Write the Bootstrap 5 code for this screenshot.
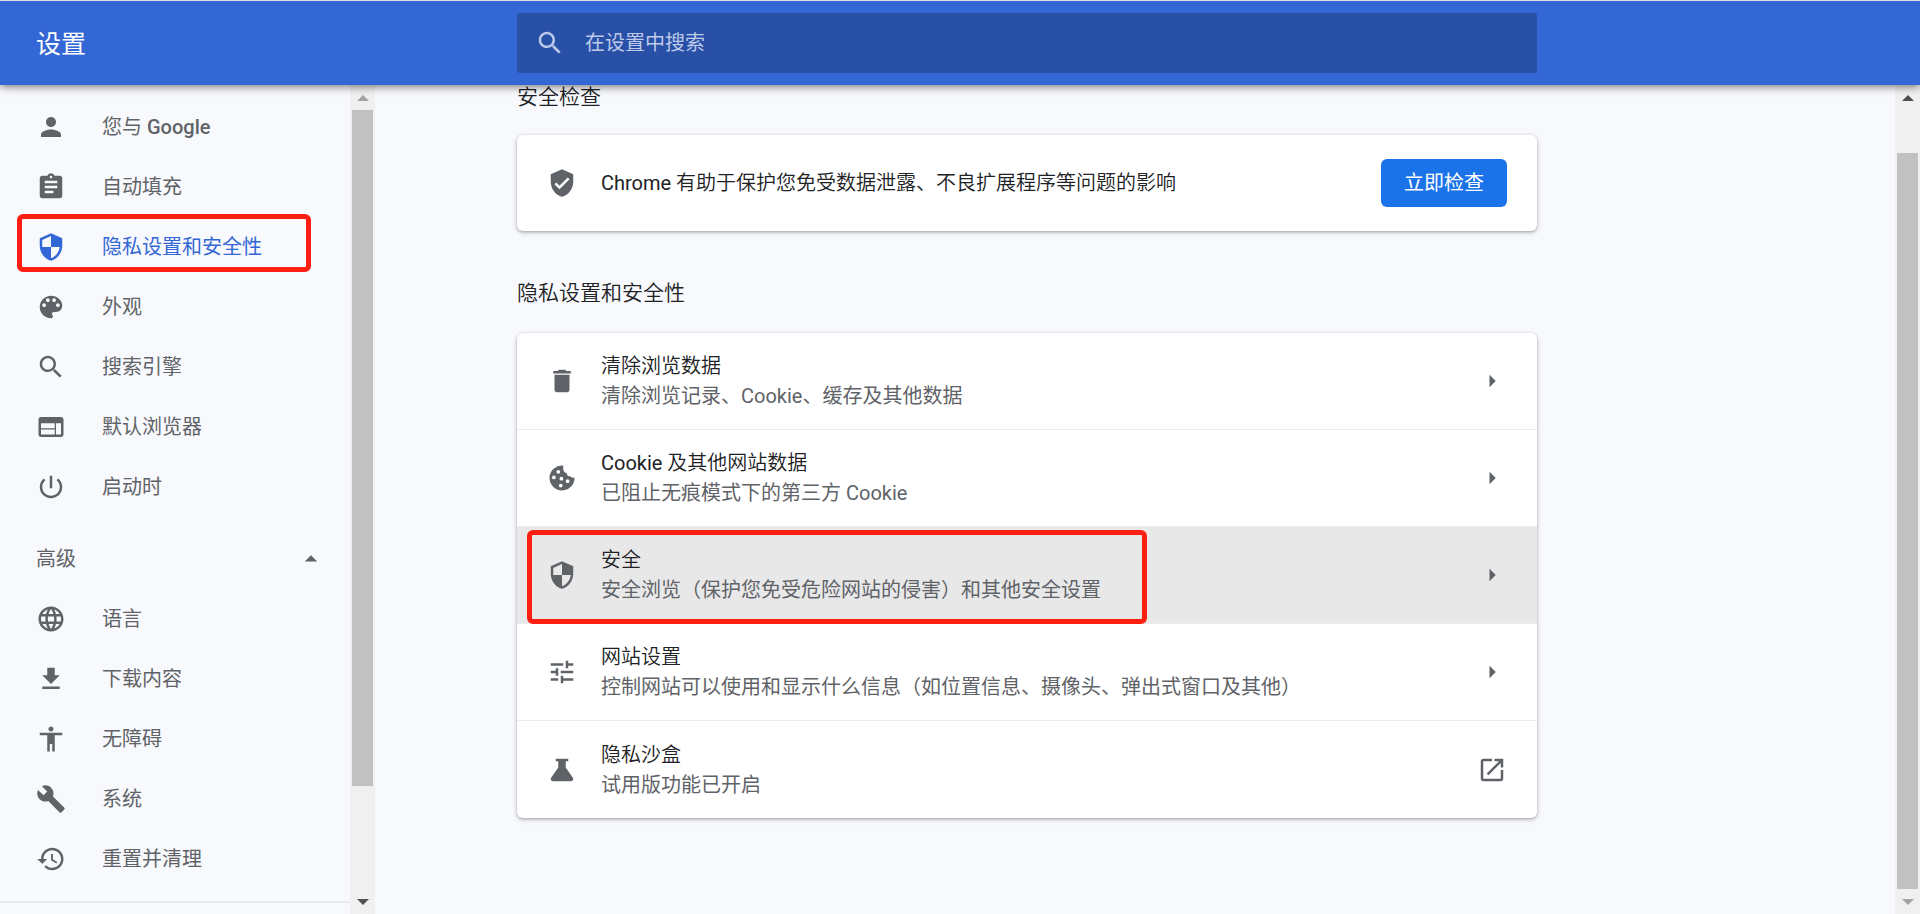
<!DOCTYPE html>
<html lang="zh-CN">
<head>
<meta charset="utf-8">
<meta name="viewport" content="width=device-width, initial-scale=1">
<title>设置</title>
<link href="https://cdn.jsdelivr.net/npm/bootstrap@5.3.0/dist/css/bootstrap.min.css" rel="stylesheet">
<style>
  body { font: 350 20px/30px Roboto, "Noto Sans CJK SC", sans-serif; color: #202124; background: #f8f9fc; }
  svg { width: 30px; height: 30px; fill: #5f6368; flex: none; display: block; }
  .topbar { background: #3367d6; border-top: 1px solid #dee1e6; height: 85px; z-index: 2; box-shadow: 0 1px 9px rgba(0,0,0,.6); }
  .topbar-name { width: 517px; padding: 4px 0 0 36px; font-size: 25px; font-weight: 400; color: #fff; flex: none; }
  .find-box { background: #2850a7; border-radius: 3px; height: 60px; max-width: 1020px; padding: 0 18px; gap: 20px; }
  .find-box svg { fill: #bdcaea; }
  .find-box input { border: 0; background: none; outline: 0; color: #fff; min-width: 0; }
  .find-box input::placeholder { color: #bdcaea; opacity: 1; }
  .side { width: 350px; padding-top: 12px; overflow: hidden; flex: none; }
  .side-link { display: flex; align-items: center; height: 60px; padding-left: 36px; gap: 36px; color: #5f6368; font-weight: 400; text-decoration: none; position: relative; white-space: nowrap; }
  .side-link.current { color: #3367d6; }
  .side-link.current svg { fill: #3367d6; }
  .latin { font-weight: 400; }
  .side-link .latin { font-weight: 500; }
  .side-more { width: 100%; height: 72px; padding: 12px 24px 0 36px; border: 0; background: none; color: #5f6368; font-weight: 400; }
  .side-rule { border-top: 2px solid #e8eaed; margin-top: 12px; }
  .marker { position: absolute; border: 5px solid #ff1f12; border-radius: 6px; pointer-events: none; }
  .side-link .marker { left: 17px; top: -3px; width: 294px; height: 58px; }
  .option .marker { left: 10px; top: 3px; width: 620px; height: 94px; max-width: 96%; }
  .bar { width: 25px; background: #f0f0f0; flex: none; }
  .bar-end { height: 25px; display: flex; align-items: center; justify-content: center; flex: none; }
  .bar-end::before { content: ""; border: 6px solid transparent; border-top-width: 0; border-bottom: 6px solid #505050; }
  .bar-end.down::before { border-bottom-width: 0; border-top: 6px solid #505050; }
  .bar-end.off::before { border-top-color: #a3a3a3; border-bottom-color: #a3a3a3; }
  .bar-thumb { background: #c1c1c1; margin: 0 2px; }
  .content { padding: 0 142px; min-width: 0; }
  .content-col { max-width: 1020px; }
  .section-name { font-size: 21px; line-height: 24px; font-weight: 350; margin: 0 0 26px; }
  .panel + .section-name { margin: 50px 0 28px; }
  .panel { background: #fff; border-radius: 6px; box-shadow: 0 1px 3px rgba(60,64,67,.35), 0 2px 5px rgba(60,64,67,.18); overflow: hidden; }
  .check-row { min-height: 96px; padding: 0 30px; gap: 24px; }
  .go { background: #1a73e8; color: #fff; border: 0; border-radius: 6px; height: 48px; width: 126px; flex: none; font-weight: 400; padding: 0; }
  .option { min-height: 97px; padding: 0 30px; gap: 24px; border-bottom: 1px solid #ececec; color: inherit; text-decoration: none; position: relative; display: flex; align-items: center; }
  .option:last-child { border-bottom: 0; }
  .option.hovered { background: #e8e8e8; }
  .hint { color: #5f6368; font-weight: 400; }
</style>
</head>
<body class="vh-100 d-flex flex-column overflow-hidden">

<header class="topbar d-flex align-items-center position-relative flex-shrink-0">
  <h1 class="topbar-name m-0">设置</h1>
  <label class="find-box d-flex align-items-center flex-grow-1">
    <svg viewBox="0 0 24 24"><path d="M15.5 14h-.79l-.28-.27C15.41 12.59 16 11.11 16 9.5 16 5.91 13.09 3 9.5 3S3 5.91 3 9.5 5.91 16 9.5 16c1.61 0 3.09-.59 4.23-1.57l.27.28v.79l5 4.99L20.49 19l-4.99-5zm-6 0C7.01 14 5 11.99 5 9.5S7.01 5 9.5 5 14 7.01 14 9.5 11.99 14 9.5 14z"/></svg>
    <input class="flex-grow-1 p-0" type="search" placeholder="在设置中搜索" aria-label="在设置中搜索">
  </label>
</header>

<div class="d-flex flex-grow-1 overflow-hidden">
  <nav class="side" aria-label="设置">
    <a class="side-link" href="#"><svg viewBox="0 0 24 24"><path d="M12 12c2.21 0 4-1.79 4-4s-1.79-4-4-4-4 1.79-4 4 1.79 4 4 4zm0 2c-2.67 0-8 1.34-8 4v2h16v-2c0-2.66-5.33-4-8-4z"/></svg><span>您与 <span class="latin">Google</span></span></a>
    <a class="side-link" href="#"><svg viewBox="0 0 24 24"><path d="M19 3h-4.18C14.4 1.84 13.3 1 12 1s-2.4.84-2.82 2H5c-1.1 0-2 .9-2 2v14c0 1.1.9 2 2 2h14c1.1 0 2-.9 2-2V5c0-1.1-.9-2-2-2zm-7 0c.55 0 1 .45 1 1s-.45 1-1 1-1-.45-1-1 .45-1 1-1zm2 14H7v-2h7v2zm3-4H7v-2h10v2zm0-4H7V7h10v2z"/></svg>自动填充</a>
    <a class="side-link current" href="#" aria-current="page"><svg viewBox="0 0 24 24"><path d="M12 1L3 5v6c0 5.55 3.84 10.74 9 12 5.16-1.26 9-6.45 9-12V5l-9-4zm0 10.99h7c-.53 4.12-3.28 7.79-7 8.94V12H5V6.3l7-3.11v8.8z"/></svg>隐私设置和安全性<span class="marker"></span></a>
    <a class="side-link" href="#"><svg viewBox="0 0 24 24"><path d="M12 3c-4.97 0-9 4.03-9 9s4.03 9 9 9c.83 0 1.5-.67 1.5-1.5 0-.39-.15-.74-.39-1.01-.23-.26-.38-.61-.38-.99 0-.83.67-1.5 1.5-1.5H16c2.76 0 5-2.24 5-5 0-4.42-4.03-8-9-8zm-5.5 9c-.83 0-1.5-.67-1.5-1.5S5.67 9 6.5 9 8 9.67 8 10.5 7.33 12 6.500 12zm3-4C8.670 8 8 7.330 8 6.500S8.670 5 9.500 5s1.500.670 1.500 1.500S10.330 8 9.500 8zm5 0c-.83 0-1.500-.670-1.500-1.500S13.670 5 14.500 5s1.500.670 1.500 1.500S15.330 8 14.500 8zm3 4c-.83 0-1.500-.670-1.500-1.500S16.670 9 17.500 9s1.500.670 1.500 1.500-.670 1.500-1.500 1.500z"/></svg>外观</a>
    <a class="side-link" href="#"><svg viewBox="0 0 24 24"><path d="M15.5 14h-.79l-.28-.27C15.41 12.59 16 11.11 16 9.5 16 5.91 13.09 3 9.5 3S3 5.91 3 9.5 5.91 16 9.5 16c1.61 0 3.09-.59 4.23-1.57l.27.28v.79l5 4.99L20.49 19l-4.99-5zm-6 0C7.01 14 5 11.99 5 9.5S7.01 5 9.5 5 14 7.01 14 9.5 11.99 14 9.5 14z"/></svg>搜索引擎</a>
    <a class="side-link" href="#"><svg viewBox="0 0 24 24"><path d="M20 4H4c-1.1 0-1.99.9-1.99 2L2 18c0 1.100.9 2 2 2h16c1.100 0 2-.9 2-2V6c0-1.100-.9-2-2-2zm-5 14H4v-4h11v4zm0-5H4V9h11v4zm5 5h-4V9h4v9z"/></svg>默认浏览器</a>
    <a class="side-link" href="#"><svg viewBox="0 0 24 24"><path d="M13 3h-2v10h2V3zm4.830 2.170l-1.420 1.420C17.990 7.860 19 9.810 19 12c0 3.870-3.130 7-7 7s-7-3.130-7-7c0-2.190 1.010-4.140 2.580-5.420L6.170 5.170C4.230 6.820 3 9.260 3 12c0 4.970 4.030 9 9 9s9-4.030 9-9c0-2.740-1.230-5.180-3.170-6.830z"/></svg>启动时</a>
    <button class="side-more d-flex align-items-center justify-content-between" type="button" aria-expanded="true">高级<svg viewBox="0 0 24 24"><path d="M7 14l5-5 5 5z"/></svg></button>
    <a class="side-link" href="#"><svg viewBox="0 0 24 24"><path d="M11.990 2C6.470 2 2 6.480 2 12s4.470 10 9.990 10C17.520 22 22 17.520 22 12S17.520 2 11.990 2zm6.930 6h-2.950c-.32-1.250-.78-2.450-1.380-3.560 1.840.63 3.370 1.910 4.330 3.560zM12 4.040c.83 1.200 1.480 2.530 1.910 3.960h-3.820c.43-1.430 1.080-2.760 1.910-3.960zM4.260 14C4.100 13.360 4 12.690 4 12s.1-1.360.26-2h3.380c-.08.66-.14 1.320-.14 2s.06 1.340.14 2H4.260zm.82 2h2.950c.32 1.250.78 2.450 1.380 3.560-1.840-.63-3.370-1.900-4.330-3.560zm2.950-8H5.080c.96-1.660 2.490-2.930 4.330-3.560C8.810 5.550 8.350 6.750 8.030 8zM12 19.960c-.83-1.200-1.480-2.530-1.910-3.960h3.820c-.43 1.430-1.080 2.760-1.910 3.960zM14.340 14H9.660c-.09-.66-.16-1.320-.16-2s.07-1.350.16-2h4.680c.09.65.16 1.320.16 2s-.07 1.340-.16 2zm.25 5.560c.6-1.110 1.060-2.310 1.380-3.560h2.950c-.96 1.650-2.490 2.930-4.330 3.560zM16.360 14c.08-.66.14-1.320.14-2s-.06-1.340-.14-2h3.380c.16.64.26 1.310.26 2s-.1 1.360-.26 2h-3.380z"/></svg>语言</a>
    <a class="side-link" href="#"><svg viewBox="0 0 24 24"><path d="M19 9h-4V3H9v6H5l7 7 7-7zM5 18v2h14v-2H5z"/></svg>下载内容</a>
    <a class="side-link" href="#"><svg viewBox="0 0 24 24"><path d="M12 2c1.100 0 2 .9 2 2s-.9 2-2 2-2-.9-2-2 .9-2 2-2zm9 7h-6v13h-2v-6h-2v6H9V9H3V7h18v2z"/></svg>无障碍</a>
    <a class="side-link" href="#"><svg viewBox="0 0 24 24"><path d="M22.700 19l-9.100-9.100c.9-2.300.4-5-1.500-6.900-2-2-5-2.400-7.400-1.300L9 6 6 9 1.600 4.700C.4 7.100.9 10.100 2.900 12.100c1.900 1.900 4.600 2.400 6.900 1.500l9.100 9.100c.4.4 1 .4 1.400 0l2.300-2.300c.5-.4.5-1.100.1-1.400z"/></svg>系统</a>
    <a class="side-link" href="#"><svg viewBox="0 0 24 24"><path d="M13 3c-4.970 0-9 4.030-9 9H1l3.890 3.890.07.140L9 12H6c0-3.870 3.130-7 7-7s7 3.130 7 7-3.130 7-7 7c-1.930 0-3.680-.79-4.940-2.060l-1.420 1.420C8.270 19.990 10.510 21 13 21c4.970 0 9-4.030 9-9s-4.030-9-9-9zm-1 5v5l4.280 2.540.72-1.210-3.500-2.080V8H12z"/></svg>重置并清理</a>
    <div class="side-rule"></div>
  </nav>
  <div class="bar d-flex flex-column" aria-hidden="true">
    <div class="bar-end off"></div>
    <div class="flex-grow-1"><div class="bar-thumb" style="height:86.800%"></div></div>
    <div class="bar-end down"></div>
  </div>

  <main class="content flex-grow-1">
    <div class="content-col">
      <h2 class="section-name">安全检查</h2>
      <section class="panel check-row d-flex align-items-center">
        <svg viewBox="0 0 24 24"><path d="M12 1L3 5v6c0 5.550 3.840 10.740 9 12 5.160-1.260 9-6.450 9-12V5l-9-4zm-2 16l-4-4 1.410-1.410L10 14.170l6.590-6.590L18 9l-8 8z"/></svg>
        <div class="flex-grow-1"><span class="latin">Chrome</span> 有助于保护您免受数据泄露、不良扩展程序等问题的影响</div>
        <button class="go" type="button">立即检查</button>
      </section>

      <h2 class="section-name">隐私设置和安全性</h2>
      <section class="panel">
        <a class="option" href="#">
          <svg viewBox="0 0 24 24"><path d="M6 19c0 1.100.9 2 2 2h8c1.100 0 2-.9 2-2V7H6v12zM19 4h-3.500l-1-1h-5l-1 1H5v2h14V4z"/></svg>
          <div class="flex-grow-1"><div>清除浏览数据</div><div class="hint">清除浏览记录、Cookie、缓存及其他数据</div></div>
          <svg viewBox="0 0 24 24"><path d="M10 17l5-5-5-5v10z"/></svg>
        </a>
        <a class="option" href="#">
          <svg viewBox="0 0 24 24"><path fill-rule="evenodd" d="M13 2a10 10 0 1 0 9 9.500c-1.200.6-2.600.2-3.300-.9-1.700.3-3-.9-2.800-2.500-1.800-.3-3.100-2-2.900-4zM9 5.500a1.500 1.500 0 1 1 0 3 1.500 1.500 0 0 1 0-3zM5.500 10a1.500 1.500 0 1 1 0 3 1.500 1.500 0 0 1 0-3zM11.500 11a1.500 1.500 0 1 1 0 3 1.500 1.500 0 0 1 0-3zM16.500 13a1.500 1.500 0 1 1 0 3 1.500 1.500 0 0 1 0-3zM11 16.500a1.500 1.500 0 1 1 0 3 1.500 1.500 0 0 1 0-3z"/></svg>
          <div class="flex-grow-1"><div><span class="latin">Cookie</span> 及其他网站数据</div><div class="hint">已阻止无痕模式下的第三方 Cookie</div></div>
          <svg viewBox="0 0 24 24"><path d="M10 17l5-5-5-5v10z"/></svg>
        </a>
        <a class="option hovered" href="#">
          <svg viewBox="0 0 24 24"><path d="M12 1L3 5v6c0 5.550 3.840 10.740 9 12 5.160-1.260 9-6.450 9-12V5l-9-4zm0 10.990h7c-.53 4.120-3.280 7.790-7 8.940V12H5V6.300l7-3.110v8.800z"/></svg>
          <div class="flex-grow-1"><div>安全</div><div class="hint">安全浏览（保护您免受危险网站的侵害）和其他安全设置</div></div>
          <svg viewBox="0 0 24 24"><path d="M10 17l5-5-5-5v10z"/></svg>
          <span class="marker"></span>
        </a>
        <a class="option" href="#">
          <svg viewBox="0 0 24 24"><path d="M3 17v2h6v-2H3zM3 5v2h10V5H3zm10 16v-2h8v-2h-8v-2h-2v6h2zM7 9v2H3v2h4v2h2V9H7zm14 4v-2H11v2h10zm-6-4h2V7h4V5h-4V3h-2v6z"/></svg>
          <div class="flex-grow-1"><div>网站设置</div><div class="hint">控制网站可以使用和显示什么信息（如位置信息、摄像头、弹出式窗口及其他）</div></div>
          <svg viewBox="0 0 24 24"><path d="M10 17l5-5-5-5v10z"/></svg>
        </a>
        <a class="option" href="#">
          <svg viewBox="0 0 24 24"><path d="M7 3h10v2h-2v5l5.700 8.200c.9 1.300 0 2.800-1.500 2.800H4.800c-1.500 0-2.400-1.500-1.500-2.800L9 10V5H7z"/></svg>
          <div class="flex-grow-1"><div>隐私沙盒</div><div class="hint">试用版功能已开启</div></div>
          <svg viewBox="0 0 24 24"><path d="M19 19H5V5h7V3H5c-1.110 0-2 .9-2 2v14c0 1.100.89 2 2 2h14c1.100 0 2-.9 2-2v-7h-2v7zM14 3v2h3.590l-9.830 9.830 1.410 1.410L19 6.410V10h2V3h-7z"/></svg>
        </a>
      </section>
    </div>
  </main>
  <div class="bar d-flex flex-column" aria-hidden="true">
    <div class="bar-end"></div>
    <div class="flex-grow-1 d-flex flex-column justify-content-end"><div class="bar-thumb" style="height:94.500%"></div></div>
    <div class="bar-end down off"></div>
  </div>
</div>
<script src="https://cdn.jsdelivr.net/npm/bootstrap@5.3.0/dist/js/bootstrap.bundle.min.js"></script>
</body>
</html>
